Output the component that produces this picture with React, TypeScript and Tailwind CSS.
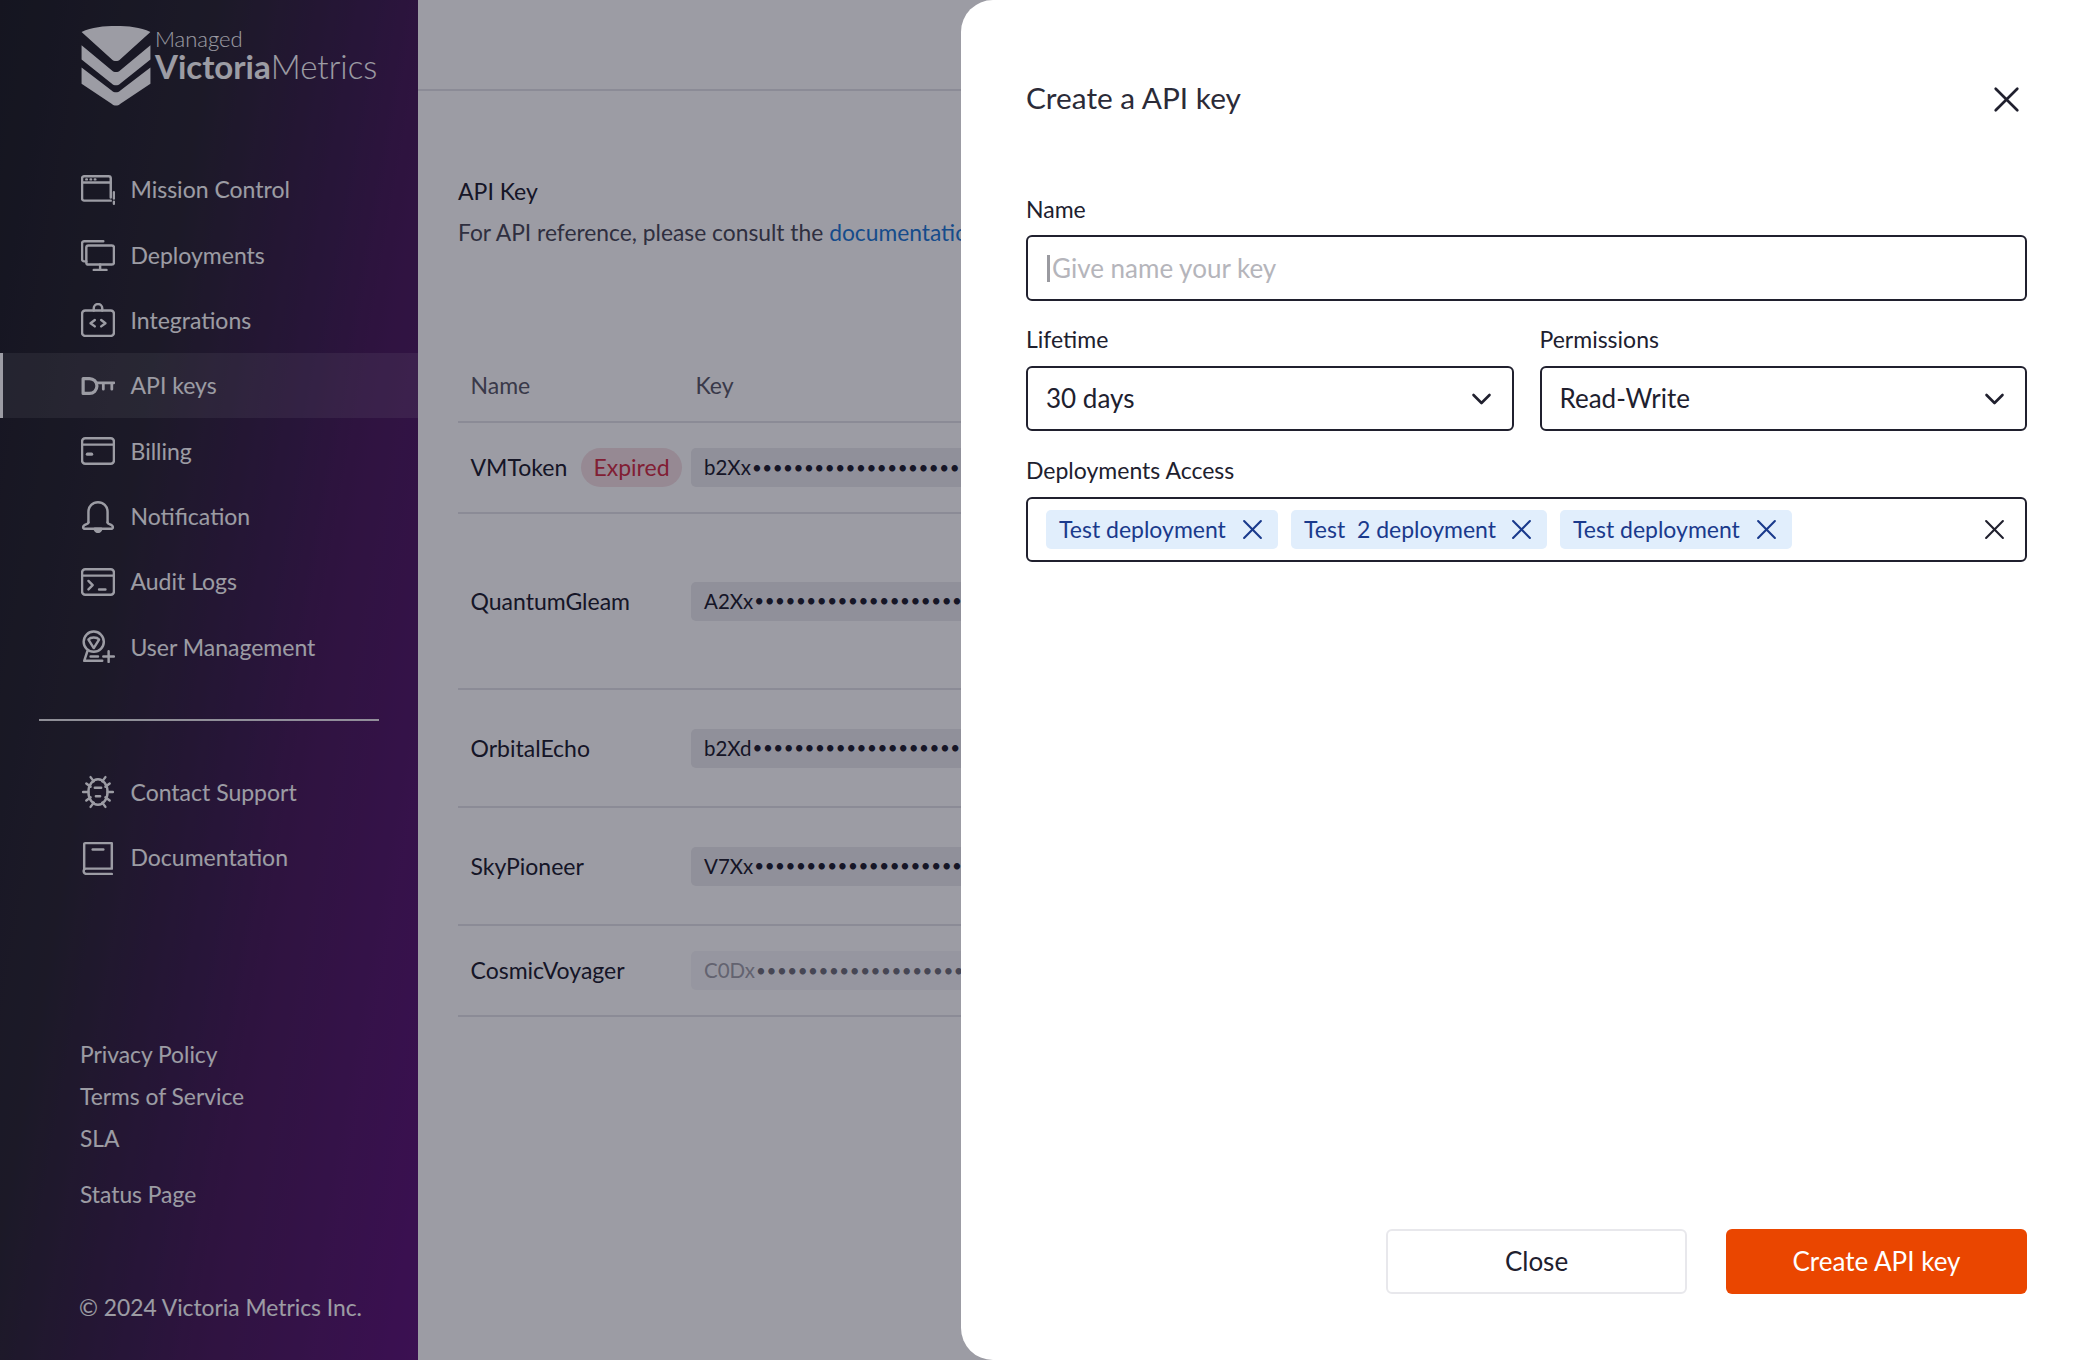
import React from "react";

const I = ({ children }: { children: React.ReactNode }) => (
  <svg viewBox="0 0 32 32" className="w-[34px] h-[34px] shrink-0" fill="none" stroke="white" strokeWidth="2.3" strokeLinecap="round" strokeLinejoin="round">
    {children}
  </svg>
);

const nav1: [string, React.ReactNode][] = [
  ["Mission Control", <><path d="M28 26H3a2 2 0 0 1-2-2V5a2 2 0 0 1 2-2h23a2 2 0 0 1 2 2v18" /><path d="M1 9h27" /><path d="M31 18v6M31 27v2" /><path d="M5 6h.5M9 6h.5M13 6h.5" /></>],
  ["Deployments", <><path d="M5 22H3a2 2 0 0 1-2-2V5a2 2 0 0 1 2-2h18" /><rect x="5" y="7" width="26" height="18" rx="2" /><path d="M18 25v4M12 30h12" /></>],
  ["Integrations", <><rect x="1" y="7" width="30" height="24" rx="3" /><path d="M12 7V5a4 4 0 0 1 8 0v2" /><path d="M13 16l-4 3 4 3M19 16l4 3-4 3" /></>],
  ["API keys", <><path d="M2 9h6a7 7 0 0 1 0 14H2z" strokeWidth="3" /><path d="M15 13h16M21 13v6M29 13v6" strokeWidth="2.6" /></>],
  ["Billing", <><rect x="1" y="4" width="30" height="24" rx="3" /><path d="M1 10h30" /><path d="M6 19h4" strokeWidth="3" /></>],
  ["Notification", <><path d="M7 22V12a9 9 0 0 1 18 0v10" /><path d="M7 22c0 2-5 2-5 4.5 0 1 1 1.500 2 1.500h24c1 0 2-.5 2-1.500C30 24 25 24 25 22" /><path d="M13 28a3 3 0 0 0 6 0z" fill="white" /></>],
  ["Audit Logs", <><rect x="1" y="4" width="30" height="24" rx="3" /><path d="M1 10h30" /><path d="M7 15l4 4-4 4M17 23h6" /></>],
  ["User Management", <><circle cx="12" cy="11" r="9.500" /><path d="M7 9c2-2.500 8-2.500 10 0l-5 8z" /><path d="M6 20l-3 9h17M9 25h7" /><path d="M26 20v10M21 25h10" /></>],
];

const Row = ({ label, icon, active }: { label: string; icon: React.ReactNode; active?: boolean }) => (
  <div className={`h-[65.33px] flex items-center gap-[15.5px] text-[23px] text-white ${active ? "bg-white/10 border-l-[3px] border-white pl-[78px]" : "pl-[81px]"}`}>
    <I>{icon}</I>
    <span>{label}</span>
  </div>
);

const Logo = () => (
  <svg viewBox="0 0 68 79" className="w-[70px] h-[80px] shrink-0" fill="white">
    <path d="M0 6C10 1 22 0 34 0s24 1 34 6L38 33c-2 2-6 2-8 0z" />
    <path d="M0 19l30 25c2 2 6 2 8 0l30-25v14L38 57c-2 2-6 2-8 0L0 33z" />
    <path d="M0 41l30 23c2 2 6 2 8 0l30-23v16L38 77c-2 2-6 2-8 0L0 57z" />
  </svg>
);

const rows = [
  { name: "VMToken", k: "b2Xx", h: 91, expired: true },
  { name: "QuantumGleam", k: "A2Xx", h: 176 },
  { name: "OrbitalEcho", k: "b2Xd", h: 118 },
  { name: "SkyPioneer", k: "V7Xx", h: 118 },
  { name: "CosmicVoyager", k: "C0Dx", h: 91, faded: true },
];

const XIcon = ({ className }: { className: string }) => (
  <svg viewBox="0 0 20 20" className={className} fill="none" stroke="currentColor" strokeWidth="2" strokeLinecap="round">
    <path d="M2 2l16 16M18 2L2 18" />
  </svg>
);

const Chevron = () => (
  <svg viewBox="0 0 20 12" className="w-[21px] h-[12px] text-[#20202e]" fill="none" stroke="currentColor" strokeWidth="2.6" strokeLinecap="round" strokeLinejoin="round">
    <path d="M2 2l8 8 8-8" />
  </svg>
);

const Tag = ({ text, w }: { text: string; w: string }) => (
  <div className={`h-[39px] ${w} rounded-[5px] bg-[#e1eefc] flex items-center justify-between pl-[13px] pr-[15px] text-[#1a3a8c] text-[23px]`}>
    <span className="whitespace-pre">{text}</span>
    <XIcon className="w-[21px] h-[21px]" />
  </div>
);

const Select = ({ label, value }: { label: string; value: string }) => (
  <div className="flex-1">
    <div className="h-[26px] leading-[26px] text-[23px] text-[#20202e]">{label}</div>
    <div className="mt-[14px] h-[65px] border-2 border-[#20202e] rounded-[6px] flex items-center justify-between pl-[18px] pr-[20px] text-[26px] text-[#20202e]">
      {value}
      <Chevron />
    </div>
  </div>
);

export default function App() {
  return (
    <div className="relative h-[1360px] w-[2092px] overflow-hidden flex bg-white [font-family:Lato,'Liberation_Sans',sans-serif]">
      <aside className="w-[418px] shrink-0 bg-[linear-gradient(100deg,#1e1f24_0%,#2a2630_33%,#3e1e4e_57%,#491c58_66%,#5f1678_100%)] text-white">
        <div className="h-[157px] pt-[26px] pl-[81px] flex items-start gap-[4px]">
          <Logo />
          <div className="pt-[1.5px]">
            <div className="text-[22px] font-light leading-[21px]">Managed</div>
            <div className="text-[33px] leading-[35px] font-light whitespace-nowrap">
              <span className="font-bold">Victoria</span>Metrics
            </div>
          </div>
        </div>
        {nav1.map(([l, ic]) => (
          <Row key={l} label={l} icon={ic} active={l === "API keys"} />
        ))}
        <div className="mt-[39px] ml-[39px] w-[340px] h-[2px] bg-white/90" />
        <div className="mt-[39px]">
          <Row
            label="Contact Support"
            icon={<><ellipse cx="16" cy="16" rx="9" ry="12" /><path d="M9 2l3 4M23 2l-3 4M9 30l3-4M23 30l-3-4M2 16h5M25 16h5M5 8l4 3M27 8l-4 3M5 24l4-3M27 24l-4-3M13 12h6M14 20h4" /></>}
          />
          <Row
            label="Documentation"
            icon={<><path d="M3 26V3a1 1 0 0 1 1-1h25v24H5a2.500 2.500 0 0 0 0 5h24" /><path d="M11 8h10" /></>}
          />
        </div>
        <div className="mt-[143px] pl-[80px] text-[22.8px] text-white">
          <div className="h-[42px] leading-[42px]">Privacy Policy</div>
          <div className="h-[42px] leading-[42px]">Terms of Service</div>
          <div className="h-[42px] leading-[42px]">SLA</div>
          <div className="mt-[14px] h-[42px] leading-[42px]">Status Page</div>
          <div className="mt-[71px] h-[42px] leading-[42px] -ml-[1px]">© 2024 Victoria Metrics Inc.</div>
        </div>
      </aside>

      <main className="flex-1 min-w-0">
        <div className="h-[91px] border-b-2 border-[#e3e3e8]" />
        <div className="pl-[40px]">
          <div className="mt-[84px] text-[23px] leading-[32px] text-[#20202e]">API Key</div>
          <div className="mt-[9px] text-[22.8px] leading-[32px] text-[#4a4a58] whitespace-nowrap">
            For API reference, please consult the <span className="text-[#1f7ad6]">documentation</span>
          </div>
          <div className="mt-[102px] h-[73px] pl-[12.5px] flex items-center text-[23px] text-[#5a5a68] border-b-2 border-[#e3e3e8]">
            <span className="w-[225px]">Name</span>
            <span>Key</span>
          </div>
          {rows.map((r) => (
            <div key={r.name} style={{ height: r.h }} className="pl-[12.5px] flex items-center border-b-2 border-[#e3e3e8] text-[23px] text-[#20202e] whitespace-nowrap">
              <span className="w-[220.5px] flex items-center justify-between pr-[9px]">
                {r.name}
                {r.expired && <span className="h-[39px] w-[101px] rounded-full bg-[#f6dfe3] text-[#d32f45] flex items-center justify-center">Expired</span>}
              </span>
              <div className={`h-[39px] w-[600px] rounded-[5px] flex items-center pl-[13px] overflow-hidden ${r.faded ? "bg-[#f6f6f8] text-[#a0a0a8]" : "bg-[#ebebee]"}`}>
                <span className="text-[20.5px]">{r.k}</span>
                <span className={`text-[17px] tracking-[0.55px] ml-[1px] ${r.faded ? "text-[#70707a]" : ""}`}>{"•".repeat(40)}</span>
              </div>
            </div>
          ))}
        </div>
      </main>

      <div className="absolute inset-0 bg-[rgba(8,8,28,0.4)]" />

      <section className="absolute top-0 right-0 bottom-0 w-[1131px] bg-white rounded-l-[32px] pl-[65px] pr-[65px] flex flex-col">
        <div className="h-[197px] pt-[78px] flex justify-between">
          <h2 className="text-[29.8px] leading-[40px] text-[#2b2b38]">Create a API key</h2>
          <XIcon className="w-[27px] h-[27px] mt-[8px] mr-[7px] text-[#20202e]" />
        </div>
        <div className="h-[24px] leading-[24px] text-[23px] text-[#20202e]">Name</div>
        <div className="mt-[14px] h-[66px] border-2 border-[#20202e] rounded-[6px] flex items-center pl-[19px] text-[26px] text-[#b5b5bb]">
          <span className="w-[3px] h-[27px] bg-[#9a9aa0] mr-[2px]" />
          Give name your key
        </div>
        <div className="mt-[25px] flex gap-[26px]">
          <Select label="Lifetime" value="30 days" />
          <Select label="Permissions" value="Read-Write" />
        </div>
        <div className="mt-[26px] h-[26px] leading-[26px] text-[23px] text-[#20202e]">Deployments Access</div>
        <div className="mt-[14px] h-[65px] border-2 border-[#20202e] rounded-[6px] flex items-center pl-[18px] pr-[20px] gap-[13px]">
          <Tag text="Test deployment" w="w-[232px]" />
          <Tag text="Test  2 deployment" w="w-[256px]" />
          <Tag text="Test deployment" w="w-[232px]" />
          <XIcon className="ml-auto w-[21px] h-[21px] text-[#20202e]" />
        </div>
        <div className="mt-auto mb-[66px] flex justify-end gap-[39px]">
          <button className="w-[301px] h-[65px] border-2 border-[#e8e8ec] rounded-[6px] text-[26px] text-[#20202e]">Close</button>
          <button className="w-[301px] h-[65px] bg-[#ea4600] rounded-[6px] text-[26px] text-white">Create API key</button>
        </div>
      </section>
    </div>
  );
}
